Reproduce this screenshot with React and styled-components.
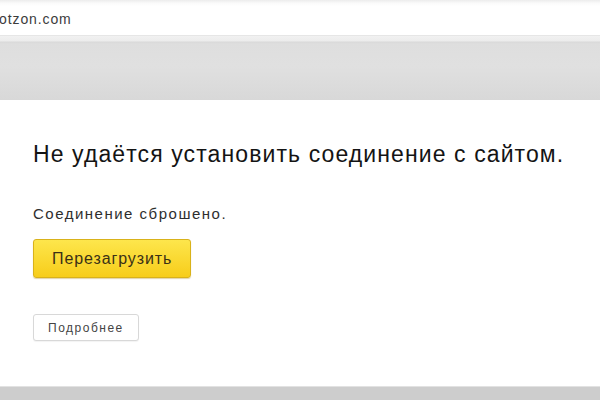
import styled, { createGlobalStyle } from "styled-components";

const GlobalStyle = createGlobalStyle`
	html, body {
		margin: 0;
		padding: 0;
		background: #fff;
		font-family: "Liberation Sans", Arial, sans-serif;
	}
`;

const Page = styled.div`
	width: 600px;
	height: 400px;
	display: flex;
	flex-direction: column;
	overflow: hidden;
`;

const AddressBar = styled.div`
	height: 36px;
	display: flex;
	align-items: center;
	background: linear-gradient(#ececec 0, #fafafa 3px, #fff 6px, #fff 100%);
	border-bottom: 1px solid #e6e6e6;
	box-sizing: border-box;
	padding-top: 3px;
`;

const Url = styled.span`
	font-size: 14px;
	letter-spacing: 0.9px;
	color: #3c3c3c;
	margin-left: -1px;
`;

const Toolbar = styled.div`
	height: 64px;
	background: linear-gradient(
		#f1f1f1 0,
		#ececec 5px,
		#d9d9d9 6px,
		#dedede 8px,
		#e0e0e0 30px,
		#d8d8d8 64px
	);
`;

const Content = styled.main`
	flex: 1;
	padding: 41px 33px 0;
	display: flex;
	flex-direction: column;
	align-items: flex-start;
`;

const Title = styled.h1`
	margin: 0;
	font-size: 23px;
	letter-spacing: 1.1px;
	font-weight: normal;
	color: #141414;
	line-height: 27px;
	white-space: nowrap;
`;

const Message = styled.p`
	margin: 37px 0 0;
	font-size: 15px;
	letter-spacing: 1.5px;
	color: #2e2e2e;
	line-height: 18px;
`;

const Button = styled.button`
	font-family: inherit;
	cursor: pointer;
	box-sizing: border-box;
	color: ${({ $primary }) => ($primary ? "#3a3116" : "#444")};
	font-size: ${({ $primary }) => ($primary ? "16px" : "12px")};
	letter-spacing: ${({ $primary }) => ($primary ? "0.9px" : "1.5px")};
	height: ${({ $primary }) => ($primary ? "39px" : "27px")};
	padding: ${({ $primary }) => ($primary ? "0 18px" : "0 14px")};
	margin-top: ${({ $primary }) => ($primary ? "16px" : "36px")};
	border-radius: 3px;
	border: 1px solid ${({ $primary }) => ($primary ? "#d9b21a" : "#d8d8d8")};
	background: ${({ $primary }) =>
		$primary ? "linear-gradient(#fde64c, #f7cd1a)" : "#fff"};
	box-shadow: ${({ $primary }) =>
		$primary ? "0 1px 1px rgba(170,130,0,0.35)" : "0 1px 1px rgba(0,0,0,0.05)"};
`;

const Footer = styled.div`
	height: 13px;
	background: #cdcdcd;
	border-top: 1px solid #e2e2e2;
`;

const App = () => {
	return (
		<Page>
			<GlobalStyle />
			<AddressBar>
				<Url>otzon.com</Url>
			</AddressBar>
			<Toolbar />
			<Content>
				<Title>Не удаётся установить соединение с сайтом.</Title>
				<Message>Соединение сброшено.</Message>
				<Button $primary>Перезагрузить</Button>
				<Button>Подробнее</Button>
			</Content>
			<Footer />
		</Page>
	);
};

export default App;
